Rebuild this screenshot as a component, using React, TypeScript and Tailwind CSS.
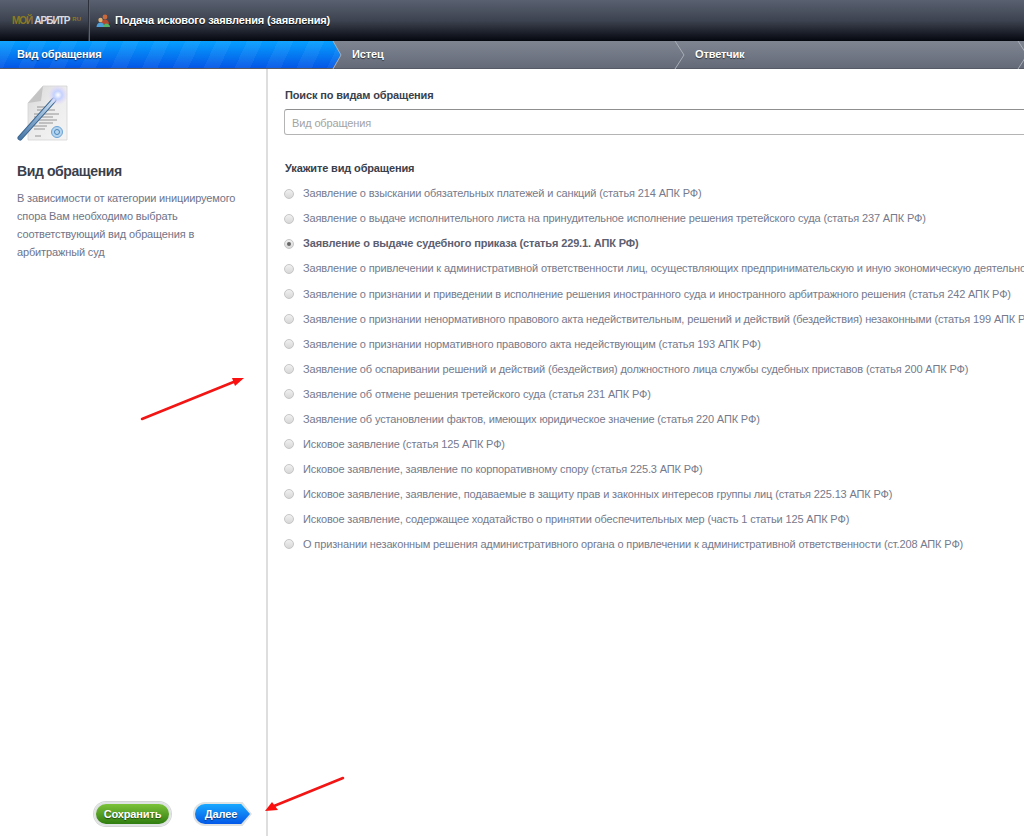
const options = [
  'Заявление о взыскании обязательных платежей и санкций (статья 214 АПК РФ)',
  'Заявление о выдаче исполнительного листа на принудительное исполнение решения третейского суда (статья 237 АПК РФ)',
  'Заявление о выдаче судебного приказа (статья 229.1. АПК РФ)',
  'Заявление о привлечении к административной ответственности лиц, осуществляющих предпринимательскую и иную экономическую деятельность (статья 202 АПК РФ)',
  'Заявление о признании и приведении в исполнение решения иностранного суда и иностранного арбитражного решения (статья 242 АПК РФ)',
  'Заявление о признании ненормативного правового акта недействительным, решений и действий (бездействия) незаконными (статья 199 АПК РФ)',
  'Заявление о признании нормативного правового акта недействующим (статья 193 АПК РФ)',
  'Заявление об оспаривании решений и действий (бездействия) должностного лица службы судебных приставов (статья 200 АПК РФ)',
  'Заявление об отмене решения третейского суда (статья 231 АПК РФ)',
  'Заявление об установлении фактов, имеющих юридическое значение (статья 220 АПК РФ)',
  'Исковое заявление (статья 125 АПК РФ)',
  'Исковое заявление, заявление по корпоративному спору (статья 225.3 АПК РФ)',
  'Исковое заявление, заявление, подаваемые в защиту прав и законных интересов группы лиц (статья 225.13 АПК РФ)',
  'Исковое заявление, содержащее ходатайство о принятии обеспечительных мер (часть 1 статьи 125 АПК РФ)',
  'О признании незаконным решения административного органа о привлечении к административной ответственности (ст.208 АПК РФ)',
]

function PeopleIcon() {
  return (
    <svg width="14" height="14" viewBox="0 0 14 14">
      <circle cx="9" cy="3" r="2.4" fill="#c96a3c" />
      <path d="M5 10c0-3 2-4.500 4-4.500s4 1.500 4 4.500z" fill="#b5492f" />
      <circle cx="4.500" cy="6" r="2.200" fill="#e8b26e" />
      <path d="M0.500 13c0-3 2-4.500 4-4.500s4 1.500 4 4.500z" fill="#4f9fd8" />
      <path d="M7 13c0-2 2-3.500 3.500-3.500S14 11 14 13z" fill="#58b368" />
    </svg>
  )
}

function DocIcon() {
  return (
    <svg width="52" height="58" viewBox="0 0 52 58">
      <defs>
        <linearGradient id="page" x1="0" y1="0" x2="1" y2="1">
          <stop offset="0" stopColor="#d8d8d8" />
          <stop offset="0.5" stopColor="#ececec" />
          <stop offset="1" stopColor="#f4f4f4" />
        </linearGradient>
        <linearGradient id="wand" x1="0" y1="1" x2="1" y2="0">
          <stop offset="0" stopColor="#4a79a8" />
          <stop offset="0.6" stopColor="#94b6d6" />
          <stop offset="1" stopColor="#d3e4f5" />
        </linearGradient>
        <radialGradient id="glow">
          <stop offset="0" stopColor="#ffffff" />
          <stop offset="0.4" stopColor="#c3d2ff" />
          <stop offset="1" stopColor="#e3d2ff" stopOpacity="0" />
        </radialGradient>
      </defs>
      <path d="M26 1H50V55H11V18z" fill="url(#page)" stroke="#d4d4d4" strokeWidth="0.8" />
      <path d="M26 1L24 16L11 18z" fill="#c4c4c4" />
      <g stroke="#8a8a8a" strokeWidth="0.9">
        <path d="M20 22H33M20 25H38M17 29H42M17 32H36M17 35H40M22 38H36M17 41H30M17 44H28" />
        <path d="M18 51H24" />
      </g>
      <circle cx="40" cy="47" r="5.500" fill="#b5d4ee" stroke="#6aa3d6" />
      <circle cx="40" cy="47" r="2.500" fill="none" stroke="#4a86bb" />
      <path d="M3 53L37 15" stroke="#3a6590" strokeWidth="5" strokeLinecap="round" />
      <path d="M3 53L37 15" stroke="url(#wand)" strokeWidth="3.200" strokeLinecap="round" />
      <circle cx="41" cy="10" r="10" fill="url(#glow)" />
    </svg>
  )
}

function Arrows() {
  return (
    <svg className="absolute inset-0 pointer-events-none" width="1024" height="836" viewBox="0 0 1024 836">
      <g fill="#fb0f0f">
        <path d="M142 419L236 381" stroke="#f31414" strokeWidth="2.500" strokeLinecap="round" />
        <path d="M244 378L232 378L235 386z" />
        <path d="M343 778L274 806" stroke="#f31414" strokeWidth="2.500" strokeLinecap="round" />
        <path d="M265 811L272 802L278 810z" />
      </g>
    </svg>
  )
}

function Step({ label, active }: { label: string; active?: boolean }) {
  return (
    <div
      className={
        active
          ? 'w-[341px] h-full shrink-0 pl-[17px] flex items-center text-white [clip-path:polygon(0_0,333px_0,341px_50%,333px_100%,0_100%)] bg-[repeating-linear-gradient(115deg,rgba(255,255,255,0.05)_0_14px,rgba(255,255,255,0)_14px_28px),linear-gradient(#06a0ff,#0456e6)]'
          : 'w-[343px] h-full shrink-0 pl-[11px] flex items-center text-white'
      }
    >
      <span className="[text-shadow:0_1px_1px_rgba(0,0,0,0.6)]">{label}</span>
    </div>
  )
}

export default function App() {
  return (
    <div className="relative w-[1024px] h-[836px] overflow-hidden bg-white font-['Liberation_Sans',Arial,sans-serif] text-[11px] tracking-[-0.14px]">
      <header className="h-[41px] flex items-center bg-[linear-gradient(#596070,#3d4350_50%,#05070f)]">
        <div className="w-[88px] h-full flex items-center pl-[12px] font-bold text-[10px] tracking-[-1px]">
          <span className="text-[#8d7a24]">МОЙ</span>
          <span className="text-[#d8dbe0] ml-[2px]">АРБИТР</span>
          <span className="text-[#8d7a24] text-[6px] tracking-normal ml-[3px] -mt-[3px]">RU</span>
        </div>
        <div className="w-[2px] h-full bg-[#2c303a] border-r border-[#5a606e]" />
        <div className="ml-[6px] flex items-center gap-[5px]">
          <PeopleIcon />
          <span className="font-bold text-white [text-shadow:0_1px_1px_rgba(0,0,0,0.8)]">
            Подача искового заявления (заявления)
          </span>
        </div>
      </header>

      <nav className="relative h-[28px] flex font-bold bg-[linear-gradient(#7f8692,#646a78)] border-b border-[#555a66]">
        <Step label="Вид обращения" active />
        <Step label="Истец" />
        <Step label="Ответчик" />
        <svg className="absolute top-0 left-0" width="1024" height="28" viewBox="0 0 1024 28">
          <path d="M333 0L341 14L333 28M675 0L684 14L675 28M1018 0L1027 14L1018 28" fill="none" stroke="#a9aeb7" />
        </svg>
      </nav>

      <div className="flex h-[767px]">
        <aside className="w-[268px] shrink-0 flex flex-col border-r-2 border-[#dedede] pl-[17px]">
          <div className="mt-[16px] h-[58px]">
            <DocIcon />
          </div>
          <h2 className="mt-[19px] text-[14px] leading-[18px] font-bold tracking-[-0.4px] text-[#3a404c]">Вид обращения</h2>
          <p className="mt-[9px] w-[225px] text-[11px] leading-[18px] text-[#6f7488]">
            В зависимости от категории инициируемого спора Вам необходимо выбрать соответствующий вид обращения в арбитражный суд
          </p>
          <div className="mt-auto mb-[10px] ml-[77px] flex items-center gap-[22px]">
            <button className="h-[24px] w-[77px] rounded-full border-2 border-[#dfe3e3] shadow-[0_0_0_1px_#d4d6d6] text-white font-bold text-[11px] tracking-[-0.14px] bg-[linear-gradient(#7cc23a,#2f7d10)] [text-shadow:0_1px_1px_rgba(0,0,0,0.5)]">
              Сохранить
            </button>
            <div className="h-[24px] w-[59px] p-[2px] rounded-l-full bg-[#dfe3e3] [clip-path:polygon(0_0,84%_0,100%_50%,84%_100%,0_100%)]">
              <button className="w-full h-full pr-[3px] text-white font-bold text-[11px] tracking-[-0.14px] rounded-l-full [clip-path:polygon(0_0,84%_0,100%_50%,84%_100%,0_100%)] bg-[linear-gradient(#18a8ff,#0458e8)] [text-shadow:0_1px_1px_rgba(0,0,0,0.5)]">
                Далее
              </button>
            </div>
          </div>
        </aside>

        <main className="flex-1 min-w-0 pl-[16px] pt-[19px]">
          <label className="block ml-[1px] font-bold text-[#3a404c] leading-[14px]">Поиск по видам обращения</label>
          <div className="mt-[7px] w-[800px] h-[26px] flex items-center pt-[2px] px-[7px] rounded-[3px] bg-white border border-[#b4b4b4] border-t-[#8f8f8f] text-[#a3a3a3]">
            Вид обращения
          </div>
          <h3 className="mt-[26px] ml-[1px] font-bold text-[#3a404c] leading-[14px]">Укажите вид обращения</h3>
          <ul className="mt-[6px] whitespace-nowrap">
            {options.map((text, i) => (
              <li key={text} className="h-[25.07px] flex items-center">
                <span className="w-[10px] h-[10px] shrink-0 rounded-full border border-[#c6c6c6] bg-[linear-gradient(#f0f0f0,#d8d8d8)] flex items-center justify-center">
                  {i === 2 && <span className="w-[4px] h-[4px] rounded-full bg-[#666]" />}
                </span>
                <span className={i === 2 ? 'ml-[9px] font-bold text-[#5c6070]' : 'ml-[9px] text-[#757a8c]'}>{text}</span>
              </li>
            ))}
          </ul>
        </main>
      </div>

      <Arrows />
    </div>
  )
}
